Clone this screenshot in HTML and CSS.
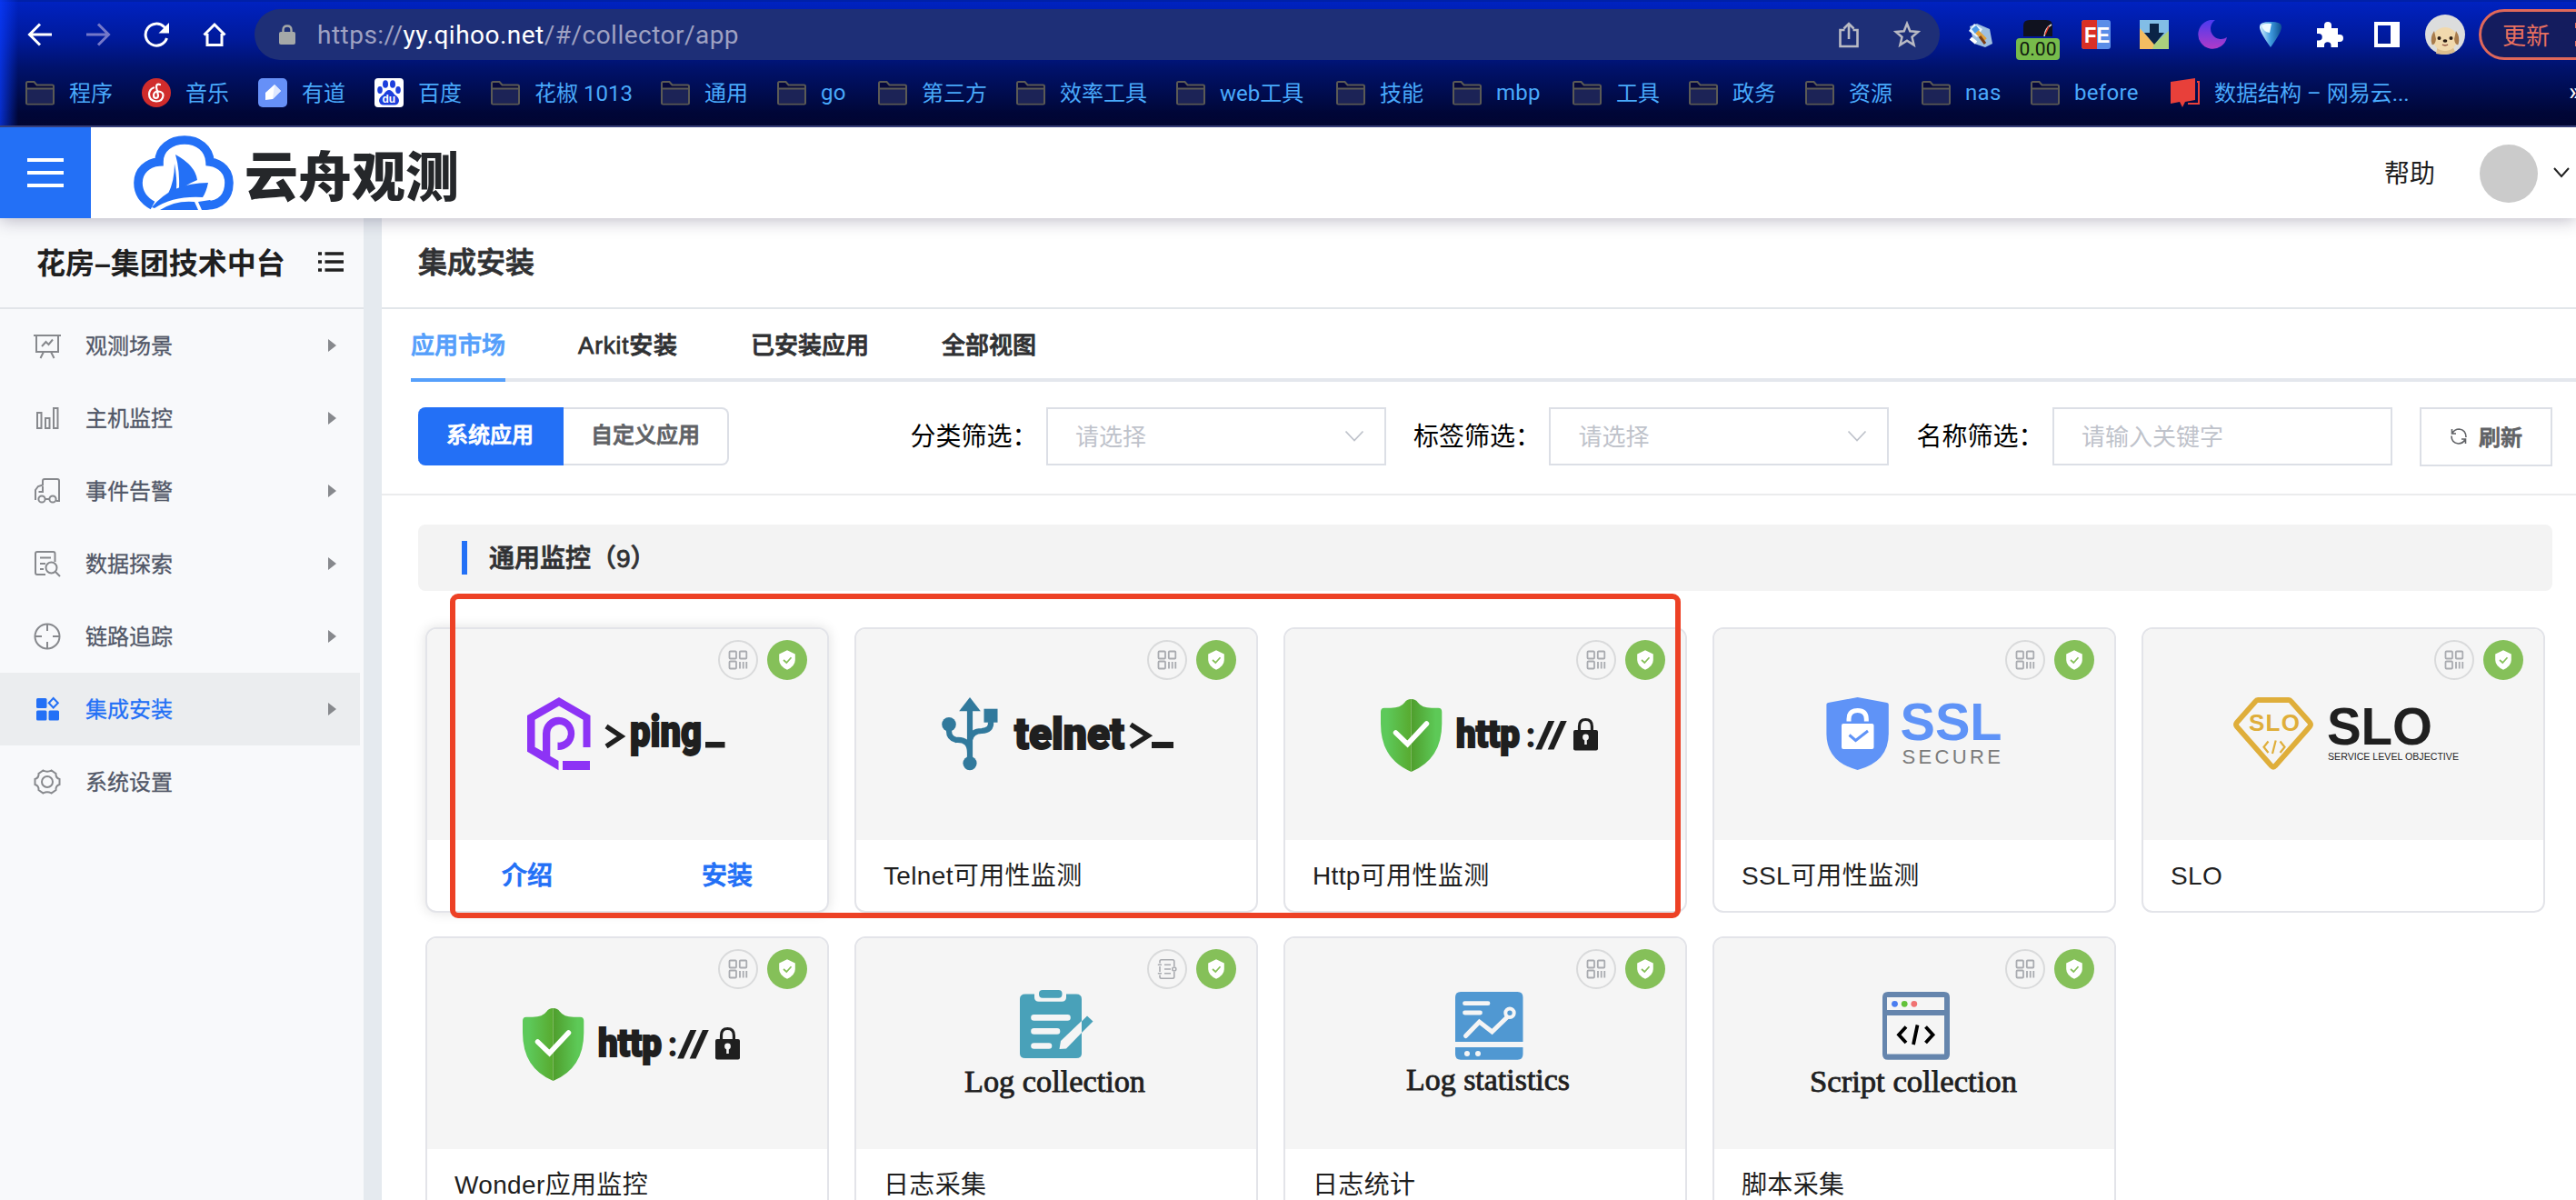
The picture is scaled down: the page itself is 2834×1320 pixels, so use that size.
FILE: index.html
```html
<!DOCTYPE html>
<html lang="zh-CN">
<head>
<meta charset="utf-8">
<title>云舟观测</title>
<link rel="stylesheet" href="styles.css">
</head>
<body>
<svg class="defs" width="0" height="0" aria-hidden="true">
  <defs>
    <linearGradient id="shieldL" x1="0" x2="1" y1="0" y2="0"><stop offset="0.2" stop-color="#5dc95a"/><stop offset="1" stop-color="#58aa2f"/></linearGradient>
    <linearGradient id="shieldR" x1="0" x2="1" y1="0" y2="0"><stop offset="0" stop-color="#4f9e2c"/><stop offset="0.8" stop-color="#5dc957"/></linearGradient>
    <linearGradient id="moonFill" x1="0" x2="0" y1="0" y2="1"><stop offset="0" stop-color="#4a3bf0"/><stop offset="1" stop-color="#b03ac8"/></linearGradient>
    <linearGradient id="gemFill" x1="0" x2="1" y1="0" y2="0"><stop offset="0" stop-color="#d6f0ff"/><stop offset="0.5" stop-color="#3f9be0"/><stop offset="1" stop-color="#0d4f8f"/></linearGradient>
  </defs>
  <symbol id="folder" viewBox="0 0 32 28">
    <path d="M1 25V3.500Q1 2 2.500 2H9.500L12.500 5.500H29.500Q31 5.500 31 7V25Q31 26.500 29.500 26.500H2.500Q1 26.500 1 25Z" fill="#05083c" stroke="#5b5a55" stroke-width="2"/>
    <path d="M2 10H30V25.500H2Z" fill="#1c2356"/><path d="M1 9.500H31" stroke="#5b5a55" stroke-width="2"/>
  </symbol>
  <symbol id="grid" viewBox="0 0 22 22">
    <g fill="none" stroke="#a9abb0" stroke-width="1.800"><rect x="1.500" y="1.500" width="7.500" height="8" rx="1"/><rect x="12.800" y="1.500" width="7.500" height="8" rx="1"/><rect x="1.500" y="12.500" width="7.500" height="8" rx="1"/><path d="M13 13v7.500M16.700 13v7.500M20.300 13v7.500"/></g>
  </symbol>
  <symbol id="log" viewBox="0 0 22 22">
    <g fill="none" stroke="#a9abb0" stroke-width="1.600"><path d="M3 4.500V2.500Q3 .8 4.700.8H17Q18.800.8 18.800 2.500V8M18.800 14V19.500Q18.800 21.200 17 21.200H4.700Q3 21.200 3 19.500V17.500M3 8V14M.8 6.200H5M.8 15.800H5M8 6.200H15M8 11H15M8 15.800H15"/><circle cx="18.800" cy="11" r="2"/></g>
  </symbol>
  <symbol id="safe" viewBox="0 0 18 22">
    <path d="M9 .3L17.800 4.500V11Q17.800 17.500 9 21.800Q.2 17.500.2 11V4.500Z" fill="#fff"/><path d="M5 11L8.300 14L13.500 8.300" fill="none" stroke="#85c059" stroke-width="1.700"/>
  </symbol>
  <symbol id="http" viewBox="0 0 440 232">
    <path d="M138.600 77Q133.500 77 131.500 80.500Q127 86.700 116 86.700H109Q105 86.700 105 91V104Q105 143 138.600 157Z" fill="url(#shieldL)"/>
    <path d="M138.600 77Q143.700 77 145.700 80.500Q150.200 86.700 161 86.700H168.300Q172.300 86.700 172.300 91V104Q172.300 143 138.600 157Z" fill="url(#shieldR)"/>
    <path d="M121.500 114L134.500 126.500L155.500 104" fill="none" stroke="#fff" stroke-width="5.500" stroke-linecap="round"/>
    <text x="188" y="129.800" font-size="42" textLength="70" lengthAdjust="spacingAndGlyphs" class="black">http</text>
    <text x="264.500" y="129.500" font-size="38" textLength="11" lengthAdjust="spacingAndGlyphs" class="slashes">:</text>
    <text x="276" y="129.500" font-size="41" textLength="34" lengthAdjust="spacingAndGlyphs" class="slashes">//</text>
    <path d="M323.500 113V107Q323.500 99.500 330.400 99.500T337.400 107V113" fill="none" stroke="#1f1f1f" stroke-width="3.200"/>
    <rect x="317" y="111" width="27" height="22.500" rx="2" fill="#1f1f1f"/><circle cx="330.500" cy="119" r="3.400" fill="#f5f5f5"/><path d="M330.500 119V127" stroke="#f5f5f5" stroke-width="2.600"/>
  </symbol>
</svg>

<div class="chrome">
  <div class="toolbar">
    <div class="nav">
      <svg width="28" height="28" viewBox="0 0 28 28"><path d="M27 14H3M14 2.500L2.500 14L14 25.500" fill="none" stroke="#fff" stroke-width="3"/></svg>
      <svg width="28" height="28" viewBox="0 0 28 28"><path d="M1 14H25M14 2.500L25.500 14L14 25.500" fill="none" stroke="#7478c9" stroke-width="3"/></svg>
      <svg width="28" height="28" viewBox="0 0 28 28"><path d="M25.500 18A12 12 0 1 1 22.500 5.500L25 8" fill="none" stroke="#fff" stroke-width="3"/><path d="M28 1V12.500H16.500Z" fill="#fff"/></svg>
      <svg width="28" height="28" viewBox="0 0 28 28"><path d="M6 13V25.500H22V13M2.500 14.500L14 3L25.500 14.500" fill="none" stroke="#fff" stroke-width="3"/></svg>
    </div>
    <div class="omnibox">
      <svg width="18" height="22" viewBox="0 0 18 22"><rect x="0" y="8" width="18" height="14" rx="2" fill="#a5a8a8"/><path d="M4.500 9V6Q4.500 1.500 9 1.500T13.500 6V9" fill="none" stroke="#a5a8a8" stroke-width="2.400"/></svg>
      <span class="url">https://<b>yy.qihoo.net</b>/#/collector/app</span>
      <svg class="share" width="24" height="30" viewBox="0 0 24 30"><path d="M7.500 10H2.500V28H21.500V10H16.500M12 20V3M6.500 8.500L12 3L17.500 8.500" fill="none" stroke="#b9bac4" stroke-width="2.600"/></svg>
      <svg width="30" height="30" viewBox="0 0 30 30"><path d="M15 3L18.300 11.300L27.300 12L20.500 17.700L22.600 26.500L15 21.700L7.400 26.500L9.500 17.700L2.700 12L11.700 11.300Z" fill="none" stroke="#b9bac4" stroke-width="2.500"/></svg>
    </div>
    <div class="exts">
      <svg width="32" height="32" viewBox="0 0 32 32"><path d="M5 7L13 4L27 10L30 26L22 30L10 26Z" fill="#9fc0e0"/><path d="M4 12L10 4L19 10L13 19Z" fill="#e9f6ff"/><path d="M7 10L12 6L16 11L11 15Z" fill="#4d9be6"/><path d="M13 13L22 22" stroke="#e1a23b" stroke-width="5"/><path d="M16 18L22 26" stroke="#7a3d16" stroke-width="3"/><path d="M6 20L12 25" stroke="#fff" stroke-width="4"/></svg>
      <div class="speed"><svg width="32" height="18" viewBox="0 0 32 18"><path d="M0 18V6Q0 0 7 0H25Q32 0 32 6V18Z" fill="#10121f"/><path d="M23 18Q24 9 31 5" fill="none" stroke="#ddd" stroke-width="1.500"/><path d="M24 16L28 7" stroke="#e03020" stroke-width="1.500"/></svg><span>0.00</span></div>
      <svg width="32" height="32" viewBox="0 0 32 32"><rect width="32" height="32" rx="3" fill="#5a8de8"/><path d="M3 0H17V32H3Q0 32 0 29V3Q0 0 3 0Z" fill="#d93025"/><text x="3" y="24.500" font-size="23" textLength="28" lengthAdjust="spacingAndGlyphs" class="fe">FE</text></svg>
      <svg width="32" height="32" viewBox="0 0 32 32"><rect width="32" height="32" fill="#82bde6"/><path d="M0 9L16 26L20 32H0Z" fill="#f3bd62"/><path d="M16 26L32 12V32H14Z" fill="#abd07d"/><path d="M11 4H21V14H27L16 27L5 14H11Z" fill="#0b2447"/></svg>
      <svg width="32" height="32" viewBox="0 0 32 32"><path d="M19 0A16 16 0 1 0 32 19A10.500 10.500 0 1 1 19 0Z" fill="url(#moonFill)"/></svg>
      <svg width="32" height="32" viewBox="0 0 32 32"><path d="M4 7Q4 2 16 2T28 7Q29 12 16 30Q3 12 4 7Z" fill="url(#gemFill)"/><path d="M6 6Q10 3 17 4L15 14Q8 13 6 6Z" fill="#eefaff"/></svg>
      <svg width="32" height="32" viewBox="0 0 32 32"><path d="M4 9H11V6A4 4 0 0 1 19 6V9H26V16H28A3.800 3.800 0 0 1 28 24H26V30H18.500V28A3.700 3.700 0 0 0 11 28V30H3V22.500H5A3.700 3.700 0 0 0 5 15H3V9Z" fill="#fff"/></svg>
      <svg width="32" height="32" viewBox="0 0 32 32"><path d="M2 2H30V30H2ZM6 6V26H20V6Z" fill="#fff" fill-rule="evenodd"/></svg>
    </div>
    <svg class="me" width="44" height="44" viewBox="0 0 44 44"><circle cx="22" cy="22" r="22" fill="#dcdddd"/><path d="M12 43L14 34H30L33 41Q28 44 22 44T12 43Z" fill="#dcbd8d"/><ellipse cx="22" cy="27" rx="13.500" ry="13" fill="#f1d9ad"/><path d="M10 18Q5 25 7.500 33Q11 34 12 27ZM34 18Q39 25 36.500 33Q33 34 32 27Z" fill="#a97c4c"/><circle cx="15.500" cy="26" r="2" fill="#2a1c14"/><circle cx="28.500" cy="26" r="2" fill="#2a1c14"/><ellipse cx="22" cy="29" rx="2.400" ry="1.800" fill="#2a1c14"/><path d="M19 33Q22 35 25 33" fill="none" stroke="#8b4a3a" stroke-width="1.500"/></svg>
    <div class="update"><span>更新</span><i></i></div>
  </div>
  <div class="bookmarks">
    <div class="bm"><svg class="fi"><use href="#folder"/></svg><span>程序</span></div>
    <div class="bm"><svg width="32" height="32" viewBox="0 0 32 32"><circle cx="16" cy="16" r="16" fill="#d02c2c"/><path d="M20 7Q16 5.500 16 10L18 19Q18 22 15.500 22Q13 22 13 18.500Q13.500 14.500 18 14.500Q23.500 15 23.500 19Q23 25.500 16 25.500Q8 25 8 17.500Q8.500 12 13 10.500" fill="none" stroke="#fff" stroke-width="2.200" stroke-linecap="round"/></svg><span>音乐</span></div>
    <div class="bm"><svg width="32" height="32" viewBox="0 0 32 32"><rect width="32" height="32" rx="5" fill="#6690f7"/><path d="M8 16L18 7L25 14L16 23L8 24Z" fill="#fff"/><path d="M18 7L25 14L16 23Z" fill="#dfe8ff"/></svg><span>有道</span></div>
    <div class="bm"><svg width="32" height="32" viewBox="0 0 32 32"><rect width="32" height="32" rx="4" fill="#fff"/><g fill="#1d3fdc"><ellipse cx="12" cy="6.500" rx="3" ry="4.300"/><ellipse cx="20" cy="6.500" rx="3" ry="4.300"/><ellipse cx="6" cy="13" rx="2.800" ry="4"/><ellipse cx="26" cy="13" rx="2.800" ry="4"/><path d="M16 13Q19 13 22 18Q27 21 27 25Q26 30 21 29.500H11Q6 30 5 25Q5 21 10 18Q13 13 16 13Z"/></g><text x="8.500" y="27" font-size="12" class="fe">du</text></svg><span>百度</span></div>
    <div class="bm"><svg class="fi"><use href="#folder"/></svg><span>花椒 1013</span></div>
    <div class="bm"><svg class="fi"><use href="#folder"/></svg><span>通用</span></div>
    <div class="bm"><svg class="fi"><use href="#folder"/></svg><span class="lat">go</span></div>
    <div class="bm"><svg class="fi"><use href="#folder"/></svg><span>第三方</span></div>
    <div class="bm"><svg class="fi"><use href="#folder"/></svg><span>效率工具</span></div>
    <div class="bm"><svg class="fi"><use href="#folder"/></svg><span>web工具</span></div>
    <div class="bm"><svg class="fi"><use href="#folder"/></svg><span>技能</span></div>
    <div class="bm"><svg class="fi"><use href="#folder"/></svg><span class="lat">mbp</span></div>
    <div class="bm"><svg class="fi"><use href="#folder"/></svg><span>工具</span></div>
    <div class="bm"><svg class="fi"><use href="#folder"/></svg><span>政务</span></div>
    <div class="bm"><svg class="fi"><use href="#folder"/></svg><span>资源</span></div>
    <div class="bm"><svg class="fi"><use href="#folder"/></svg><span class="lat">nas</span></div>
    <div class="bm"><svg class="fi"><use href="#folder"/></svg><span class="lat">before</span></div>
    <div class="bm"><svg width="32" height="32" viewBox="0 0 32 32"><path d="M0 4L27 0V24L16 26L13 32L10 26L0 28Z" fill="#e8403a"/><path d="M29 4H31V28H19" fill="none" stroke="#e8403a" stroke-width="2"/></svg><span>数据结构 – 网易云...</span></div>
    <div class="more">»</div>
  </div>
</div>

<header class="header">
  <div class="burger"><i></i><i></i><i></i></div>
  <svg class="logo" width="110" height="82" viewBox="0 0 110 82">
    <path d="M21 77C10 71 5 62 5 52C5 39 15 30 28 29C28 14 41 5 56 5C71 5 83 14 84 29C97 31 105 40 105 52C105 66 97 77 80 77" fill="none" stroke="#2370f6" stroke-width="9.600"/>
    <path d="M46 21Q68 33 70 49Q58 54 50 61Q51 38 46 21Z" fill="#2370f6"/><path d="M45 31Q48 48 47 60L38 64Q45 50 45 31Z" fill="#2370f6"/>
    <path d="M20 79Q42 52 82 52Q80 62 76 68Q44 66 23 80Z" fill="#2370f6"/><path d="M29 82Q46 71 67 73L71 82Z" fill="#2370f6"/><path d="M71 73L84 71L92 79L80 82H75Z" fill="#2370f6"/>
  </svg>
  <span class="brand">云舟观测</span>
  <span class="help">帮助</span>
  <span class="avatar"></span>
  <svg width="18" height="14" viewBox="0 0 18 14"><path d="M1 2L9 11L17 2" fill="none" stroke="#222" stroke-width="2"/></svg>
</header>

<div class="body">
  <aside class="sidebar">
    <div class="team"><span>花房–集团技术中台</span>
      <svg width="28" height="22" viewBox="0 0 28 22"><path d="M7.500 2H28M7.500 11H28M7.500 20H28M0 2H4M0 11H4M0 20H4" stroke="#1f1f1f" stroke-width="3.400"/></svg>
    </div>
    <nav class="menu">
      <div class="item"><svg width="32" height="32" viewBox="0 0 32 32"><path d="M1 5H31M4 5V23H28V5M12 23L8.500 30M20 23L23.500 30M10 17L14.500 12L17.500 15L22 9.500" /></svg><span>观测场景</span><b></b></div>
      <div class="item"><svg width="32" height="32" viewBox="0 0 32 32"><path d="M5 10H9.500V27H5ZM14 16H18.500V27H14ZM23 5H27.500V27H23Z"/></svg><span>主机监控</span><b></b></div>
      <div class="item"><svg width="32" height="32" viewBox="0 0 32 32"><path d="M3 26V15L6 11L11 9.500V5Q11 3 13 3H27Q29 3 29 5V27H26M6.500 17H11V11M14 25H18"/><circle cx="10" cy="25" r="3.600"/><circle cx="22" cy="25" r="3.600"/></svg><span>事件告警</span><b></b></div>
      <div class="item"><svg width="32" height="32" viewBox="0 0 32 32"><path d="M24.500 14V5Q24.500 3 22.500 3H5Q3 3 3 5V26Q3 28 5 28H14M8 9.500H20M8 16H14M8 22H12M25 25L30 30"/><circle cx="20.500" cy="20.500" r="6"/></svg><span>数据探索</span><b></b></div>
      <div class="item"><svg width="32" height="32" viewBox="0 0 32 32"><circle cx="16" cy="16" r="13.500"/><path d="M16 3V10M16 22V29M3 16H10M22 16H29"/></svg><span>链路追踪</span><b></b></div>
      <div class="item active"><svg width="32" height="32" viewBox="0 0 32 32"><rect class="f" x="4" y="4" width="11.500" height="11" rx="1.500"/><rect class="f" x="4" y="17.500" width="11.500" height="11" rx="1.500"/><rect class="f" x="17.500" y="17.500" width="11.500" height="11" rx="1.500"/><path d="M22.700 4L27.800 9.200L22.700 14.500L17.700 9.200Z"/></svg><span>集成安装</span><b></b></div>
      <div class="item"><svg width="32" height="32" viewBox="0 0 32 32"><path d="M11.500 3.500Q16 6 20.500 3.500L25.500 7Q25 11.500 29.500 13V19Q25 20.500 25.500 25L20.500 28.500Q16 26 11.500 28.500L6.500 25Q7 20.500 2.500 19V13Q7 11.500 6.500 7Z"/><circle cx="16" cy="16" r="6"/></svg><span>系统设置</span></div>
    </nav>
  </aside>

  <main class="main">
    <h1 class="title">集成安装</h1>
    <div class="tabs"><span class="tab on">应用市场</span><span class="tab mixed">Arkit安装</span><span class="tab">已安装应用</span><span class="tab">全部视图</span></div>
    <div class="filters">
      <div class="seg"><span class="on">系统应用</span><span>自定义应用</span></div>
      <label>分类筛选：</label><div class="field"><span>请选择</span><svg width="22" height="14" viewBox="0 0 22 14"><path d="M1.500 1.500L11 11.500L20.500 1.500"/></svg></div>
      <label>标签筛选：</label><div class="field"><span>请选择</span><svg width="22" height="14" viewBox="0 0 22 14"><path d="M1.500 1.500L11 11.500L20.500 1.500"/></svg></div>
      <label>名称筛选：</label><div class="field"><span>请输入关键字</span></div>
      <div class="refresh"><svg width="20" height="20" viewBox="0 0 20 20"><path d="M2.500 2V7H7M3 6.500Q5.500 2 10.500 2Q18 3 18 11M17.500 18V13H13M17 13.500Q14.500 18 9.500 18Q2 17 2 9.500" fill="none" stroke="#606266" stroke-width="1.600"/></svg><span>刷新</span></div>
    </div>
    <section class="market">
      <h2 class="group"><span>通用监控（9）</span></h2>
      <div class="cards">
        <div class="card hover">
          <div class="art"><svg viewBox="0 0 440 232">
            <path d="M145 75L179.500 95V130H171.500V99.700L145 84.500L118.500 99.700V129.700L127 134.500V115A17.600 18.200 0 1 1 143.500 133V124.500A9.800 9.800 0 1 0 135.300 115V139.700L144.500 145V155.300L110 134.700V95Z" fill="#8d33f5"/><rect x="149" y="145" width="30" height="10" fill="#8d33f5"/>
            <path d="M197 107L213.500 118L197 129" fill="none" stroke="#1f1f1f" stroke-width="5.400"/>
            <text x="223" y="128.500" font-size="48" textLength="79" lengthAdjust="spacingAndGlyphs" class="black">ping</text><rect x="306" y="124" width="21.500" height="6.500" fill="#1f1f1f"/></svg>
            <div class="badges"><i class="ring"><svg width="22" height="22"><use href="#grid"/></svg></i><i class="ok"><svg width="18" height="22"><use href="#safe"/></svg></i></div></div>
          <div class="foot acts"><span>介绍</span><span>安装</span></div>
        </div>
        <div class="card">
          <div class="art"><svg viewBox="0 0 440 232">
            <g fill="#31799c"><path d="M125 75L136.800 90.300H113.200Z"/><circle cx="125" cy="147.600" r="7.600"/><circle cx="102" cy="104.700" r="7.800"/><rect x="140.500" y="87.700" width="15" height="15"/></g>
            <path d="M125 88V142M102 108V112Q102 120 110 122Q125 121 125 136M148 102Q149 111.500 138 112Q127 112 125 122" fill="none" stroke="#31799c" stroke-width="6.200"/>
            <text x="174" y="132.200" font-size="48" textLength="121" lengthAdjust="spacingAndGlyphs" class="black">telnet</text>
            <path d="M302 105L321 117.300L302 129.500" fill="none" stroke="#1f1f1f" stroke-width="5.600"/><rect x="325" y="124" width="24" height="7" fill="#1f1f1f"/></svg>
            <div class="badges"><i class="ring"><svg width="22" height="22"><use href="#grid"/></svg></i><i class="ok"><svg width="18" height="22"><use href="#safe"/></svg></i></div></div>
          <div class="foot">Telnet可用性监测</div>
        </div>
        <div class="card">
          <div class="art"><svg viewBox="0 0 440 232"><use href="#http"/></svg>
            <div class="badges"><i class="ring"><svg width="22" height="22"><use href="#grid"/></svg></i><i class="ok"><svg width="18" height="22"><use href="#safe"/></svg></i></div></div>
          <div class="foot">Http可用性监测</div>
        </div>
        <div class="card">
          <div class="art"><svg viewBox="0 0 440 232">
            <path d="M157.600 75L190 81Q191.800 81.500 191.800 83V115Q191.800 146 157.600 155Q123.400 146 123.400 115V83Q123.400 81.500 125.200 81Z" fill="#5f93f7"/>
            <rect x="140" y="104" width="35.500" height="28" rx="2" fill="#fff"/><path d="M148 101.500V99Q148 89.500 157.600 89.500T167.300 99V101.500" fill="none" stroke="#fff" stroke-width="5"/><path d="M148.500 116.500L155.500 122.500L169 112" fill="none" stroke="#5f93f7" stroke-width="3"/>
            <text x="204.500" y="122.300" font-size="56.500" textLength="112" lengthAdjust="spacingAndGlyphs" class="ssl">SSL</text><text x="206.500" y="148" font-size="22" textLength="108.500" class="secure">SECURE</text></svg>
            <div class="badges"><i class="ring"><svg width="22" height="22"><use href="#grid"/></svg></i><i class="ok"><svg width="18" height="22"><use href="#safe"/></svg></i></div></div>
          <div class="foot">SSL可用性监测</div>
        </div>
        <div class="card">
          <div class="art"><svg viewBox="0 0 440 232">
            <path d="M126 78H160Q161.500 78 162.500 79.500L183 102.500Q185 105 183 107.500L145 150.500Q143 153 141 150.500L103 107.500Q101 105 103 102.500L123.500 79.500Q124.500 78 126 78Z" fill="none" stroke="#dfae3a" stroke-width="5.800"/>
            <text x="116" y="112.300" font-size="26" textLength="56" class="gold">SLO</text>
            <path d="M137.500 123.500L132.500 129.700L137.500 136M150.500 123.500L155.500 129.700L150.500 136M145.700 122.500L142 137" fill="none" stroke="#dfae3a" stroke-width="2.200"/>
            <text x="202" y="127" font-size="56.500" textLength="116" class="slo">SLO</text><text x="203" y="144.200" font-size="11.800" textLength="144" lengthAdjust="spacingAndGlyphs" class="sub">SERVICE LEVEL OBJECTIVE</text></svg>
            <div class="badges"><i class="ring"><svg width="22" height="22"><use href="#grid"/></svg></i><i class="ok"><svg width="18" height="22"><use href="#safe"/></svg></i></div></div>
          <div class="foot">SLO</div>
        </div>
        <div class="card">
          <div class="art"><svg viewBox="0 0 440 232"><use href="#http"/></svg>
            <div class="badges"><i class="ring"><svg width="22" height="22"><use href="#grid"/></svg></i><i class="ok"><svg width="18" height="22"><use href="#safe"/></svg></i></div></div>
          <div class="foot">Wonder应用监控</div>
        </div>
        <div class="card">
          <div class="art"><svg viewBox="0 0 440 232">
            <path d="M186 61.500H196V65Q196 69.800 201 69.800H226Q231 69.800 231 65V61.500H242Q248 61.500 248 67V127Q248 132 242 132H186Q180 132 180 127V67Q180 61.500 186 61.500Z" fill="#49a1b9"/><rect x="201" y="57" width="25.500" height="8.800" rx="4" fill="#49a1b9"/>
            <path d="M195.500 87.400H232.500M195.500 102.400H221M195.500 118.500H212" stroke="#f5f5f5" stroke-width="6.600" stroke-linecap="round"/>
            <path d="M248 91L225 113L223.500 122L231 121.500L248 104Z" fill="#f5f5f5"/><path d="M254 85.500L260.500 91.500L248 104V91.500Z" fill="#49a1b9"/>
            <text x="119" y="169" font-size="33" textLength="199" lengthAdjust="spacingAndGlyphs" class="serif">Log collection</text></svg>
            <div class="badges"><i class="ring"><svg width="22" height="22"><use href="#log"/></svg></i><i class="ok"><svg width="18" height="22"><use href="#safe"/></svg></i></div></div>
          <div class="foot">日志采集</div>
        </div>
        <div class="card">
          <div class="art"><svg viewBox="0 0 440 232">
            <path d="M187 114V65Q187 59 193 59H255.500Q261.500 59 261.500 65V114ZM187 120H261.500V127.500Q261.500 133.700 255.500 133.700H193Q187 133.700 187 127.500Z" fill="#5098d2"/><circle cx="200" cy="127" r="3" fill="#f5f5f5"/><circle cx="212" cy="127" r="3" fill="#f5f5f5"/>
            <path d="M197.500 71.700H223M197.500 82H214.500" stroke="#f5f5f5" stroke-width="4.800" stroke-linecap="round"/><path d="M198.500 107.500L213.500 92L227.500 103L244 87" fill="none" stroke="#f5f5f5" stroke-width="5" stroke-linecap="round"/><circle cx="247" cy="82.300" r="4.700" fill="#5098d2" stroke="#f5f5f5" stroke-width="4"/>
            <text x="133" y="167" font-size="33" textLength="180" lengthAdjust="spacingAndGlyphs" class="serif">Log statistics</text></svg>
            <div class="badges"><i class="ring"><svg width="22" height="22"><use href="#grid"/></svg></i><i class="ok"><svg width="18" height="22"><use href="#safe"/></svg></i></div></div>
          <div class="foot">日志统计</div>
        </div>
        <div class="card">
          <div class="art"><svg viewBox="0 0 440 232">
            <path d="M191 59H253Q259 59 259 65V127.700Q259 133.700 253 133.700H191Q185 133.700 185 127.700V65Q185 59 191 59ZM190 65V79H253V65ZM190 85V127.500H253V85Z" fill="#6585ad" fill-rule="evenodd"/>
            <circle cx="198.500" cy="72.300" r="3.400" fill="#4a7df0"/><circle cx="209.200" cy="72.300" r="3.400" fill="#63c23a"/><circle cx="219.800" cy="72.300" r="3.400" fill="#f07272"/>
            <path d="M211 97.500L203 106.200L211 115M232.500 97.500L240.500 106.200L232.500 115M223.500 95.500L219 117" fill="none" stroke="#000" stroke-width="3.800"/>
            <text x="105" y="169" font-size="33" textLength="228" lengthAdjust="spacingAndGlyphs" class="serif">Script collection</text></svg>
            <div class="badges"><i class="ring"><svg width="22" height="22"><use href="#grid"/></svg></i><i class="ok"><svg width="18" height="22"><use href="#safe"/></svg></i></div></div>
          <div class="foot">脚本采集</div>
        </div>
      </div>
      <div class="highlight"></div>
    </section>
  </main>
</div>
</body>
</html>
```
FILE: styles.css
```css
* { box-sizing: border-box; }
body {
  margin: 0;
  width: 2834px;
  height: 1320px;
  overflow: hidden;
  background: #fff;
  color: #1f1f1f;
  font-family: "Liberation Sans", "Noto Sans CJK SC", sans-serif;
}
svg { flex: none; display: block; }
.defs { position: absolute; }
i { font-style: normal; }

/* browser chrome */
.chrome {
  height: 140px;
  padding-top: 10px;
  overflow: hidden;
  border-bottom: 2px solid #3a4580;
  background:
    linear-gradient(90deg, rgba(10, 60, 255, .75), rgba(10, 60, 255, 0) 20px),
    linear-gradient(180deg, #0020a8 2px, #0022c0 2px, #001a9c 42px, #00126c 74px, #000738 124px, #000632 138px);
  font-family: Roboto, "Noto Sans CJK SC", sans-serif;
}
.toolbar { display: flex; align-items: center; height: 56px; }
.nav { display: flex; flex: none; gap: 36px; width: 280px; padding-left: 30px; }
.omnibox {
  display: flex;
  align-items: center;
  flex: none;
  width: 1854px;
  height: 56px;
  padding: 0 21px 0 27px;
  border-radius: 28px;
  background: #1e2f77;
}
.url { margin-left: 24px; font-size: 28px; letter-spacing: .48px; color: #9ea1c2; }
.url b { font-weight: 400; color: #fff; }
.share { margin: 0 37px 0 auto; }
.exts { display: flex; flex: none; align-items: center; gap: 32px; margin-left: 28px; }
.speed { display: flex; flex-direction: column; align-items: center; gap: 2px; width: 32px; height: 44px; margin-top: 12px; }
.speed span {
  width: 48px;
  height: 24px;
  border-radius: 4px;
  background: #77bb4b;
  color: #101a10;
  font-size: 21px;
  line-height: 25px;
  text-align: center;
}
.fe { font-family: "Liberation Sans", sans-serif; font-weight: 700; fill: #fff; }
.me { margin-left: 26px; }
.update {
  display: flex;
  align-items: center;
  flex: none;
  width: 160px;
  height: 56px;
  margin-left: 15px;
  padding-left: 23px;
  border: 3px solid #e0685a;
  border-radius: 28px;
  background: #141c5e;
  color: #e8705f;
  font-size: 26px;
}
.update span { margin-top: -2px; }
.update i { width: 6px; height: 26px; margin-left: 28px; border-top: 6px solid #e8705f; border-bottom: 6px solid #e8705f; }
.bookmarks {
  display: grid;
  grid-template-columns: 128px 128px 128px 128px 187px 128px 111px 152px 176px 176px 128px 132px 128px 128px 128px 120px 154px 438px 20px;
  align-items: center;
  height: 72px;
  padding-left: 28px;
  font-size: 24px;
  color: #49a9fb;
}
.bm { display: flex; align-items: center; gap: 16px; white-space: nowrap; }
.bm span { margin-top: -3px; }
.bm .lat { margin-top: 0; letter-spacing: .3px; }
.fi { width: 32px; height: 28px; }
.more { margin-top: -4px; color: #fff; font-size: 28px; }

/* app header */
.header {
  position: relative;
  z-index: 2;
  display: flex;
  align-items: center;
  height: 100px;
  padding-right: 7px;
  background: #fff;
  box-shadow: 0 2px 18px rgba(30, 20, 60, .3);
}
.burger { display: flex; flex-direction: column; justify-content: center; align-items: center; gap: 10px; width: 100px; height: 100px; background: #2370f6; }
.burger i { width: 40px; height: 4px; background: #fff; }
.logo { margin-left: 47px; }
.brand { margin: 11px auto 0 12px; font-size: 59px; font-weight: 900; line-height: 80px; color: #25272a; }
.help { margin-top: -2px; font-size: 28px; }
.avatar { width: 64px; height: 64px; margin: 2px 17px 0 49px; border-radius: 50%; background: #cbcbcb; }

.body { display: flex; height: 1080px; }
.sidebar { width: 420px; border-right: 20px solid #e5eaef; background: #f8f9fb; }
.team {
  display: flex;
  align-items: center;
  justify-content: space-between;
  height: 100px;
  padding: 0 22px 2px 40px;
  border-bottom: 2px solid #e2e5e9;
  font-size: 32px;
  font-weight: 700;
}
.team span { margin-top: -3px; }
.item { display: flex; align-items: center; height: 80px; margin-right: 4px; padding: 0 26px 0 36px; color: #515767; font-size: 24px; }
.item svg { fill: none; stroke: #87898d; stroke-width: 2; }
.item span { margin: -3px 0 0 26px; -webkit-text-stroke: .3px; }
.item b { margin-left: auto; border: 7px solid transparent; border-left: 9px solid #87898d; border-right: 0; }
.item.active { background: #ebedef; color: #2370f6; }
.item.active svg { stroke: #2370f6; }
.f { fill: #2370f6; stroke: none; }

.main { flex: 1; }
.title, .tabs, .seg, .refresh, .group, .acts { -webkit-text-stroke: .8px; }
.title { height: 100px; margin: 0; padding-left: 40px; border-bottom: 2px solid #e2e6ea; font-size: 32px; font-weight: 500; line-height: 98px; color: #303133; }
.tabs { display: flex; gap: 80px; height: 80px; margin-left: 32px; border-bottom: 4px solid #e4e7ed; font-size: 26px; font-weight: 500; color: #303133; line-height: 80px; }
.tab.on { height: 80px; border-bottom: 4px solid #559ffb; color: #559ffb; }
.mixed { letter-spacing: .85px; }
.filters { display: flex; align-items: center; height: 125px; padding: 0 26px 3px 40px; border-bottom: 2px solid #ebeced; }
.seg { display: flex; height: 64px; margin-right: auto; font-size: 24px; font-weight: 500; line-height: 58px; text-align: center; color: #606266; }
.seg span { width: 182px; border: 2px solid #dcdfe6; border-left: 0; border-radius: 0 8px 8px 0; }
.seg .on { width: 160px; border-color: #2370f6; border-radius: 8px 0 0 8px; background: #2370f6; color: #fff; }
.filters label { margin-top: -5px; font-size: 28px; color: #000; }
.field { display: flex; align-items: center; justify-content: space-between; width: 374px; height: 64px; margin: 0 30px 0 9.500px; padding: 0 22px 0 30px; border: 2px solid #dcdfe6; font-size: 26px; color: #bfc3cb; }
.field span { margin-top: -4px; }
.field svg { fill: none; stroke: #bfc3cb; stroke-width: 1.800; }
.refresh { display: flex; align-items: center; justify-content: center; gap: 12px; width: 146px; height: 65px; border: 2px solid #dcdfe6; font-size: 24px; font-weight: 500; color: #606266; }
.refresh span { margin-top: -2px; }

/* marketplace */
.market { position: relative; padding: 32px 26px 0 40px; }
.group { display: flex; align-items: center; height: 73px; margin: 0; padding-left: 48px; border-radius: 8px; background: #f3f3f3; font-size: 28px; font-weight: 500; color: #303133; }
.group::before { content: ""; width: 6px; height: 37px; margin-right: 24px; background: #2370f6; }
.group span { margin-top: -3px; }
.cards { display: grid; grid-template-columns: repeat(5, 444px); gap: 26px 28px; padding: 40px 8px 0; }
.card { height: 314px; overflow: hidden; border: 2px solid #e3e4e9; border-radius: 12px; background: #fff; }
.card.hover { box-shadow: 0 0 14px rgba(0, 0, 0, .12); }
.art { position: relative; height: 232px; background: #f5f5f5; }
.art > svg { width: 440px; height: 232px; }
.badges { position: absolute; top: 12px; right: 22px; display: flex; gap: 10px; }
.badges i { display: flex; align-items: center; justify-content: center; width: 44px; height: 44px; border-radius: 50%; }
.ring { border: 2px solid #d9dadb; }
.ok { background: #85c059; }
.foot { height: 78px; padding-left: 30px; font-size: 28px; line-height: 80px; letter-spacing: .35px; }
.acts { display: flex; padding: 0; font-weight: 500; letter-spacing: 0; color: #2370f6; }
.acts span { flex: 1; text-align: center; }
.black { font-family: Roboto, sans-serif; font-weight: 900; fill: #1f1f1f; stroke: #1f1f1f; stroke-width: 2; }
.slashes { font-family: Roboto, sans-serif; font-weight: 900; fill: #1f1f1f; }
.ssl, .slo, .gold { font-family: "Liberation Sans", sans-serif; font-weight: 700; fill: #5f93f7; }
.slo { fill: #1f1f1f; }
.gold { fill: #dfae3a; }
.secure { fill: #7b7b7b; }
.sub { fill: #1f1f1f; }
.serif { font-family: "Liberation Serif", serif; fill: #1f1f1f; stroke: #1f1f1f; stroke-width: .8; }
.highlight { position: absolute; left: 75px; top: 108px; width: 1354px; height: 357px; border: 6px solid #ed4125; border-radius: 9px; }
```
